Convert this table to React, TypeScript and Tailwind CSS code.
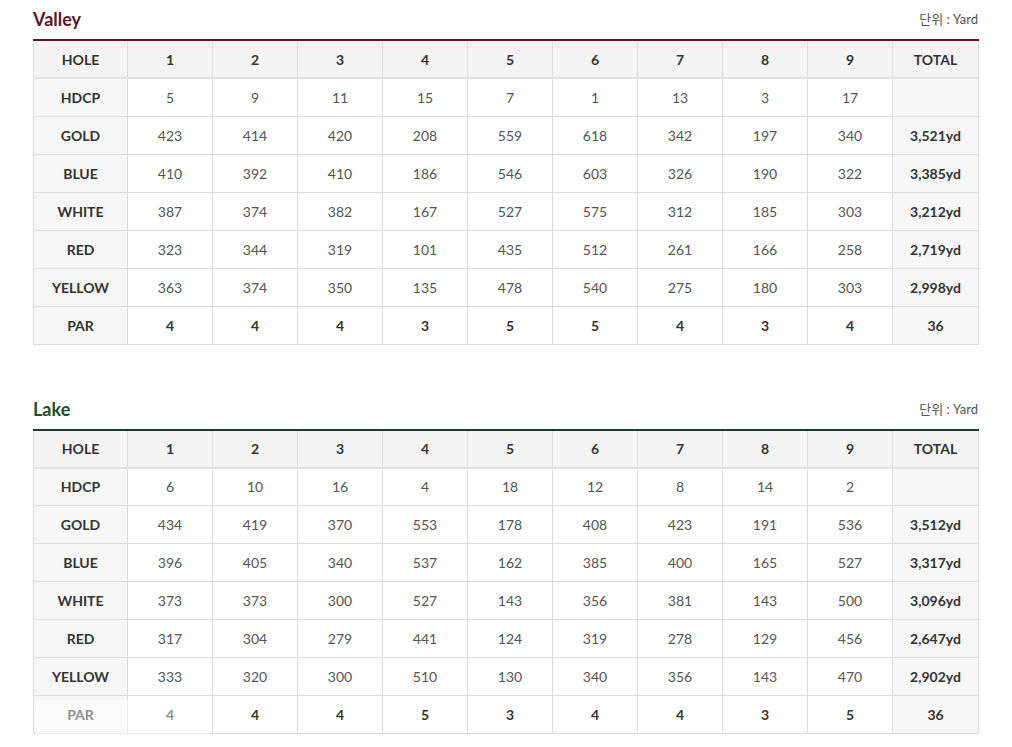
import type { ReactNode } from "react";

interface Course {
  name: string;
  titleClass: string;
  lineClass: string;
  hdcp: number[];
  tees: { label: string; yards: number[]; total: string }[];
  par: number[];
  parTotal: number;
}

const courses: Course[] = [
  {
    name: "Valley",
    titleClass: "text-[#5a1729]",
    lineClass: "border-t-[#5a1729]",
    hdcp: [5, 9, 11, 15, 7, 1, 13, 3, 17],
    tees: [
      { label: "GOLD", yards: [423, 414, 420, 208, 559, 618, 342, 197, 340], total: "3,521yd" },
      { label: "BLUE", yards: [410, 392, 410, 186, 546, 603, 326, 190, 322], total: "3,385yd" },
      { label: "WHITE", yards: [387, 374, 382, 167, 527, 575, 312, 185, 303], total: "3,212yd" },
      { label: "RED", yards: [323, 344, 319, 101, 435, 512, 261, 166, 258], total: "2,719yd" },
      { label: "YELLOW", yards: [363, 374, 350, 135, 478, 540, 275, 180, 303], total: "2,998yd" },
    ],
    par: [4, 4, 4, 3, 5, 5, 4, 3, 4],
    parTotal: 36,
  },
  {
    name: "Lake",
    titleClass: "text-[#1b4d2b]",
    lineClass: "border-t-[#1b3f24]",
    hdcp: [6, 10, 16, 4, 18, 12, 8, 14, 2],
    tees: [
      { label: "GOLD", yards: [434, 419, 370, 553, 178, 408, 423, 191, 536], total: "3,512yd" },
      { label: "BLUE", yards: [396, 405, 340, 537, 162, 385, 400, 165, 527], total: "3,317yd" },
      { label: "WHITE", yards: [373, 373, 300, 527, 143, 356, 381, 143, 500], total: "3,096yd" },
      { label: "RED", yards: [317, 304, 279, 441, 124, 319, 278, 129, 456], total: "2,647yd" },
      { label: "YELLOW", yards: [333, 320, 300, 510, 130, 340, 356, 143, 470], total: "2,902yd" },
    ],
    par: [4, 4, 4, 5, 3, 4, 4, 3, 5],
    parTotal: 36,
  },
];

const holes = [1, 2, 3, 4, 5, 6, 7, 8, 9];

function Cell({ children, className = "" }: { children?: ReactNode; className?: string }) {
  return (
    <td className={`h-[38px] border border-[#dcdcdc] p-0 text-center align-middle ${className}`}>
      {children}
    </td>
  );
}

function ScoreTable({ course, first }: { course: Course; first?: boolean }) {
  return (
    <section className={first ? "" : "mt-[45px]"}>
      <div className="flex items-center justify-between pt-[7px] pb-[8px]">
        <h2 className={`text-[18px] font-bold leading-[24px] ${course.titleClass}`}>{course.name}</h2>
        <span className="text-[13px] leading-[24px] text-[#555]">단위 : Yard</span>
      </div>
      <table className={`w-full table-fixed border-collapse border-t-2 ${course.lineClass} text-[14px]`}>
        <colgroup>
          <col className="w-[94px]" />
          {holes.map((h) => (
            <col key={h} className="w-[85px]" />
          ))}
          <col className="w-[86px]" />
        </colgroup>
        <thead>
          <tr className="bg-[#f4f4f4] font-bold text-[#333]">
            <td className="h-[38px] border-x border-b-2 border-[#dcdcdc] border-b-[#e2e2e2] text-center">HOLE</td>
            {holes.map((h) => (
              <td key={h} className="h-[38px] border-x border-b-2 border-[#dcdcdc] border-b-[#e2e2e2] text-center">
                {h}
              </td>
            ))}
            <td className="h-[38px] border-x border-b-2 border-[#dcdcdc] border-b-[#e2e2e2] text-center">TOTAL</td>
          </tr>
        </thead>
        <tbody className="text-[#555]">
          <tr>
            <Cell className="bg-[#f7f7f7] font-bold text-[#333]">HDCP</Cell>
            {course.hdcp.map((v, i) => (
              <Cell key={i}>{v}</Cell>
            ))}
            <Cell className="bg-[#f7f7f7]" />
          </tr>
          {course.tees.map((tee) => (
            <tr key={tee.label}>
              <Cell className="bg-[#f7f7f7] font-bold text-[#333]">{tee.label}</Cell>
              {tee.yards.map((v, i) => (
                <Cell key={i}>{v}</Cell>
              ))}
              <Cell className="bg-[#f7f7f7] font-bold text-[#333]">{tee.total}</Cell>
            </tr>
          ))}
          <tr className="font-bold text-[#333]">
            <Cell className="bg-[#f7f7f7]">PAR</Cell>
            {course.par.map((v, i) => (
              <Cell key={i}>{v}</Cell>
            ))}
            <Cell className="bg-[#f7f7f7]">{course.parTotal}</Cell>
          </tr>
        </tbody>
      </table>
    </section>
  );
}

export default function App() {
  return (
    <div className="relative h-[747px] w-[1012px] overflow-hidden bg-white font-['Lato','Noto_Sans_CJK_KR',sans-serif]">
      <div className="ml-[33px] w-[945px]">
        {courses.map((c, i) => (
          <ScoreTable key={c.name} course={c} first={i === 0} />
        ))}
      </div>
      {/* faint watermark wash over the bottom-left corner */}
      <div className="pointer-events-none absolute left-[36px] top-[700px] h-[36px] w-[176px] rounded-[6px] bg-white/45" />
    </div>
  );
}
